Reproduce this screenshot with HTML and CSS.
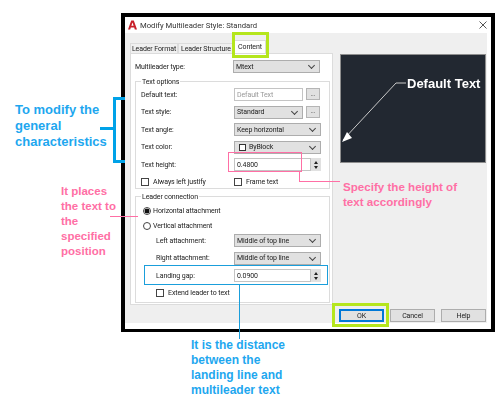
FILE: index.html
```html
<!DOCTYPE html>
<html lang="en">
<head>
<meta charset="utf-8">
<title>Modify Multileader Style</title>
<link rel="stylesheet" href="styles.css">
</head>
<body>
<main class="stage">
  <section class="dialog">
    <header class="titlebar">
      <svg class="logo" viewBox="0 0 9 9" width="9" height="10"><path d="M0 9 3.2 0h2.6L9 9H6.8L6.2 7H2.8L2.2 9z M3.4 5.2h2.2L4.5 2z" fill="#c8202a" fill-rule="evenodd"/></svg>
      <span class="title">Modify Multileader Style: Standard</span>
      <svg class="close" viewBox="0 0 8 8" width="8" height="8"><path d="M.5.5l7 7M7.5.5l-7 7" stroke="#555" fill="none"/></svg>
    </header>
    <div class="client">
      <div class="main">
        <div class="left">
          <nav class="tabs">
            <span class="tab">Leader Format</span>
            <span class="tab tab-wide">Leader Structure</span>
            <span class="tab tab-active">Content</span>
          </nav>
          <div class="panel">
            <div class="row row-top">
              <span>Multileader type:</span>
              <span class="select">Mtext</span>
            </div>
            <div class="group group-text">
              <span class="legend">Text options</span>
              <div class="stack">
                <div class="row">
                  <span>Default text:</span>
                  <span class="pair"><span class="input input-off">Default Text</span><span class="dots">...</span></span>
                </div>
                <div class="row">
                  <span>Text style:</span>
                  <span class="pair"><span class="select">Standard</span><span class="dots">...</span></span>
                </div>
                <div class="row">
                  <span>Text angle:</span>
                  <span class="select">Keep horizontal</span>
                </div>
                <div class="row">
                  <span>Text color:</span>
                  <span class="select"><i class="swatch"></i>ByBlock</span>
                </div>
                <div class="row">
                  <span>Text height:</span>
                  <span class="spin-field"><span class="input">0.4800</span><span class="spinner"><i class="up"></i><i class="down"></i></span></span>
                </div>
                <div class="row">
                  <label class="check"><i class="box"></i>Always left justify</label>
                  <label class="check"><i class="box"></i>Frame text</label>
                </div>
              </div>
            </div>
            <div class="group group-leader">
              <span class="legend">Leader connection</span>
              <label class="radio radio-first"><i class="dot dot-on"></i>Horizontal attachment</label>
              <label class="radio"><i class="dot"></i>Vertical attachment</label>
              <div class="stack stack-sub">
                <div class="row row-sub">
                  <span>Left attachment:</span>
                  <span class="select">Middle of top line</span>
                </div>
                <div class="row row-sub">
                  <span>Right attachment:</span>
                  <span class="select">Middle of top line</span>
                </div>
                <div class="row row-sub">
                  <span>Landing gap:</span>
                  <span class="spin-field"><span class="input">0.0900</span><span class="spinner"><i class="up"></i><i class="down"></i></span></span>
                </div>
                <div class="row row-sub">
                  <label class="check"><i class="box"></i>Extend leader to text</label>
                </div>
              </div>
            </div>
          </div>
        </div>
        <aside class="preview">
          <svg class="leader" viewBox="0 0 146 109" width="146" height="109">
            <path d="M3 86 56 29H66" stroke="#c9c9c9" fill="none"/>
            <path d="M2 88 7 78 12 84z" fill="#fff"/>
          </svg>
          <span class="preview-text">Default Text</span>
        </aside>
      </div>
      <footer class="actions">
        <span class="btn btn-default">OK</span>
        <span class="btn">Cancel</span>
        <span class="btn">Help</span>
      </footer>
    </div>
  </section>

  <div class="hl hl-tab"></div>
  <div class="hl hl-ok"></div>
  <div class="mark mark-height"></div>
  <div class="mark mark-height-line"></div>
  <div class="mark mark-gap"></div>
  <div class="mark mark-gap-line"></div>
  <div class="mark mark-place-line"></div>
  <div class="mark mark-bracket"></div>
  <div class="mark mark-bracket-stub"></div>

  <p class="note note-general">To modify the<br>general<br>characteristics</p>
  <p class="note note-place">It places<br>the text to<br>the<br>specified<br>position</p>
  <p class="note note-height">Specify the height of<br>text accordingly</p>
  <p class="note note-gap">It is the distance<br>between the<br>landing line and<br>multileader text</p>
</main>
</body>
</html>
```
FILE: styles.css
```css
* { box-sizing: border-box; }
html, body { margin: 0; padding: 0; background: #fff; }
.stage { position: relative; width: 499px; height: 400px; overflow: hidden; font-family: "Liberation Sans", Arial, sans-serif; }

/* dialog window */
.dialog { position: absolute; left: 121px; top: 13px; width: 374px; height: 319px; border: 4px solid #000; border-bottom-width: 3px; background: #fff; display: flex; flex-direction: column; font-family: Roboto, sans-serif; font-size: 7px; letter-spacing: -.1px; color: #222; filter: blur(.3px); }
.titlebar { height: 16px; flex: none; display: flex; align-items: center; padding: 0 4px 0 3px; }
.logo { flex: none; }
.title { margin-left: 3px; font-size: 7.7px; letter-spacing: 0; color: #333; flex: 1; }
.client { width: 362px; height: 290px; background: #efefef; display: flex; flex-direction: column; }
.main { display: flex; flex: none; }
.left { width: 203px; margin: 10px 0 0 5px; flex: none; }

/* tabs */
.tabs { display: flex; height: 10px; align-items: flex-end; }
.tab { height: 10px; width: 48px; background: #f0f0f0; border: 1px solid #dcdcdc; border-bottom: 0; display: flex; align-items: center; justify-content: center; white-space: nowrap; }
.tab-wide { width: 56px; }
.tab-active { width: 32px; height: 13px; background: #fff; border-bottom: 0; position: relative; }

/* panel */
.panel { width: 203px; height: 252px; background: #fff; border: 1px solid #dcdcdc; padding: 6px 3px 0 4px; }
.row { display: grid; grid-template-columns: 93px 87px; height: 13px; align-items: center; white-space: nowrap; }
.row-top { padding-left: 1px; grid-template-columns: 98px 87px; margin-left: -1px; }
.group { border: 1px solid #dcdcdc; width: 195px; margin-left: 0; padding-left: 5px; }
.group-text { margin-top: 8px; height: 108px; }
.group-leader { margin-top: 7px; height: 107px; }
.legend { display: block; width: fit-content; background: #fff; padding: 0 1px; margin: -5px 0 0 0; height: 10px; line-height: 10px; }
.stack { display: flex; flex-direction: column; gap: 4.5px; margin-top: 1px; }
.stack-sub { gap: 4.6px; margin-top: 2px; }
.row-sub { padding-left: 15px; grid-template-columns: 78px 87px; }

/* controls */
.select { position: relative; height: 13px; background: #e1e1e1; border: 1px solid #adadad; display: flex; align-items: center; padding-left: 2px; }
.select::after { content: ""; position: absolute; right: 5px; top: 2px; width: 4px; height: 4px; border-right: 1px solid #444; border-bottom: 1px solid #444; transform: rotate(45deg); }
.pair { display: flex; gap: 3px; width: 87px; }
.pair .select, .pair .input { width: 69px; flex: none; }
.input { height: 13px; background: #fff; border: 1px solid #c4c4c4; display: flex; align-items: center; padding-left: 2px; }
.input-off { color: #999; }
.dots { width: 14px; height: 12px; background: #e1e1e1; border: 1px solid #b5b5b5; color: #666; display: flex; align-items: center; justify-content: center; line-height: 1; }
.spin-field { display: flex; width: 87px; }
.spin-field .input { flex: 1; }
.spinner { width: 10px; height: 13px; background: #e1e1e1; display: flex; flex-direction: column; align-items: center; justify-content: center; gap: 2px; }
.up { border: 2px solid transparent; border-top: 0; border-bottom: 3px solid #222; }
.down { border: 2px solid transparent; border-bottom: 0; border-top: 3px solid #222; }
.swatch { width: 7px; height: 7px; border: 1px solid #333; background: #fff; margin: 0 3px 0 2px; }
.check { display: flex; align-items: center; gap: 4px; }
.box { width: 8px; height: 8px; border: 1px solid #444; background: #fff; flex: none; }
.radio { display: flex; align-items: center; height: 13px; gap: 2px; margin-left: 2px; margin-top: 2px; }
.radio-first { margin-top: 2px; }
.dot { width: 8px; height: 8px; border: 1px solid #444; border-radius: 50%; background: #fff; flex: none; position: relative; }
.dot-on { background: radial-gradient(circle, #111 0 2.2px, #fff 2.7px); }

/* preview */
.preview { position: relative; width: 146px; height: 109px; margin: 21px 0 0 7px; background: #222831; border: 1px solid #8e8e8e; flex: none; overflow: hidden; }
.leader { position: absolute; left: -1px; top: -1px; }
.preview-text { position: absolute; left: 66px; top: 21px; color: #fff; font-family: "Liberation Sans", sans-serif; font-size: 13px; letter-spacing: 0; font-weight: 700; white-space: nowrap; line-height: 15px; }

/* footer */
.actions { display: flex; gap: 6px; justify-content: flex-end; padding: 4px 1px 0 0; margin-right: 0; }
.btn { width: 45px; height: 13px; background: #e1e1e1; border: 1px solid #adadad; display: flex; align-items: center; justify-content: center; }
.btn-default { border: 2px solid #0078d7; }

/* annotations */
.hl { position: absolute; border: 3px solid #b5e61d; }
.hl-tab { left: 232px; top: 32px; width: 37px; height: 26px; }
.hl-ok { left: 332px; top: 303px; width: 57px; height: 24px; }
.mark { position: absolute; }
.mark-height { left: 228px; top: 152px; width: 74px; height: 20px; border: 1px solid #ff6fa5; }
.mark-height-line { left: 299px; top: 172px; width: 41px; height: 10px; border-left: 1px solid #ff6fa5; border-bottom: 1px solid #ff6fa5; }
.mark-gap { left: 144px; top: 265px; width: 184px; height: 20px; border: 1px solid #1a9edb; }
.mark-gap-line { left: 239px; top: 285px; width: 1px; height: 54px; background: #1a9edb; }
.mark-place-line { left: 110px; top: 216px; width: 28px; height: 1px; background: #ff6fa5; }
.mark-bracket { left: 113px; top: 97px; width: 12px; height: 66px; border: 3px solid #00a2e8; border-right: 0; }
.mark-bracket-stub { left: 100px; top: 127px; width: 13px; height: 3px; background: #00a2e8; }

.note { position: absolute; margin: 0; font-weight: 700; white-space: nowrap; }
.note-general { left: 15px; top: 102px; font-size: 13px; line-height: 16px; color: #1ea7ef; }
.note-place { left: 61px; top: 184px; font-size: 11.5px; line-height: 15px; color: #ff6fa5; }
.note-height { left: 343px; top: 179px; font-size: 11.6px; line-height: 15px; color: #ff6fa5; }
.note-gap { left: 191px; top: 338px; font-size: 12px; line-height: 15px; color: #1ea7ef; }
```
